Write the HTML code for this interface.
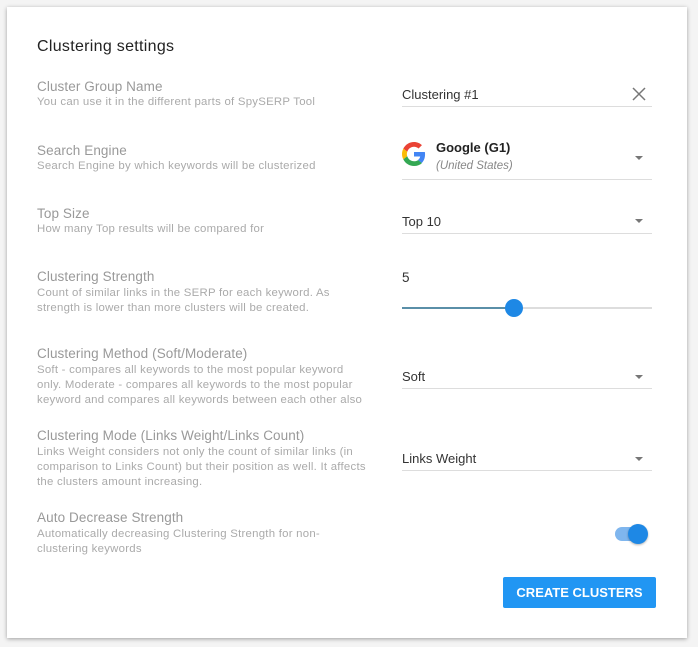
<!DOCTYPE html>
<html><head><style>
body{margin:0;width:698px;height:647px;background:#f4f4f4;font-family:"Liberation Sans",sans-serif;position:relative;overflow:hidden}
.card{position:absolute;left:7px;top:7px;width:680px;height:631px;background:#fff;box-shadow:0 1px 4px rgba(0,0,0,.35)}
.a{position:absolute;white-space:nowrap}
.t{left:37px;font-size:16px;color:#222;top:38px;letter-spacing:0.3px}
.l{left:37px;font-size:13.5px;color:#999;line-height:16px;letter-spacing:0.1px}
.d{left:37px;font-size:11.4px;color:#aaa;line-height:15px;letter-spacing:0.25px}
.v{left:402px;font-size:13px;color:#333}
.u{position:absolute;left:402px;width:250px;height:1px;background:#ddd}
.ar{position:absolute;left:635px;width:0;height:0;border-left:4px solid transparent;border-right:4px solid transparent;border-top:4px solid #777}
</style></head><body>
<div class="card"></div>
<div class="a t">Clustering settings</div>

<div class="a l" style="top:79px">Cluster Group Name</div>
<div class="a d" style="top:95px">You can use it in the different parts of SpySERP Tool</div>
<div class="a l" style="top:143px">Search Engine</div>
<div class="a d" style="top:159px">Search Engine by which keywords will be clusterized</div>
<div class="a l" style="top:206px">Top Size</div>
<div class="a d" style="top:222px">How many Top results will be compared for</div>
<div class="a l" style="top:269px">Clustering Strength</div>
<div class="a d" style="top:286px">Count of similar links in the SERP for each keyword. As<br>strength is lower than more clusters will be created.</div>
<div class="a l" style="top:346px">Clustering Method (Soft/Moderate)</div>
<div class="a d" style="top:363px">Soft - compares all keywords to the most popular keyword<br>only. Moderate - compares all keywords to the most popular<br>keyword and compares all keywords between each other also</div>
<div class="a l" style="top:428px">Clustering Mode (Links Weight/Links Count)</div>
<div class="a d" style="top:445px">Links Weight considers not only the count of similar links (in<br>comparison to Links Count) but their position as well. It affects<br>the clusters amount increasing.</div>
<div class="a l" style="top:510px">Auto Decrease Strength</div>
<div class="a d" style="top:527px">Automatically decreasing Clustering Strength for non-<br>clustering keywords</div>

<div class="a v" style="top:87px">Clustering #1</div>
<svg class="a" style="left:632px;top:87px" width="14" height="14"><path d="M1 1L13 13M13 1L1 13" stroke="#777" stroke-width="1.5"/></svg>
<div class="u" style="top:106px"></div>

<svg class="a" style="left:402px;top:142px" width="24" height="24" viewBox="0 0 48 48"><path fill="#EA4335" d="M24 9.5c3.5 0 6.6 1.2 9.1 3.6l6.8-6.8C35.8 2.4 30.2 0 24 0 14.6 0 6.6 5.4 2.6 13.3l7.9 6.2C12.4 13.7 17.7 9.5 24 9.5z"/><path fill="#4285F4" d="M46.1 24.5c0-1.6-.1-3.1-.4-4.5H24v9h12.4c-.5 2.900-2.2 5.4-4.7 7.1l7.7 6c4.5-4.2 6.7-10.3 6.7-17.6z"/><path fill="#FBBC05" d="M10.5 28.6c-.5-1.5-.8-3-.8-4.6s.3-3.1.8-4.6l-7.9-6.2C.9 16.5 0 20.1 0 24s.9 7.5 2.6 10.8l7.900-6.2z"/><path fill="#34A853" d="M24 48c6.5 0 11.9-2.1 15.9-5.8l-7.7-6c-2.2 1.5-5 2.3-8.2 2.3-6.3 0-11.6-4.2-13.5-10l-7.9 6.2C6.6 42.6 14.6 48 24 48z"/></svg>
<div class="a" style="left:436px;top:140px;font-size:13px;font-weight:bold;color:#222">Google (G1)</div>
<div class="a" style="left:436px;top:160px;font-size:11.5px;font-style:italic;color:#888">(United States)</div>
<div class="ar" style="top:156px"></div>
<div class="u" style="top:179px"></div>

<div class="a v" style="top:214px">Top 10</div>
<div class="ar" style="top:219px"></div>
<div class="u" style="top:233px"></div>

<div class="a v" style="top:270px;font-size:13.5px">5</div>
<div class="a" style="left:402px;top:307px;width:112px;height:2px;background:#5a8fa8"></div>
<div class="a" style="left:514px;top:307px;width:138px;height:2px;background:#ddd"></div>
<div class="a" style="left:505px;top:299px;width:18px;height:18px;border-radius:50%;background:#1e88e5"></div>

<div class="a v" style="top:369px">Soft</div>
<div class="ar" style="top:375px"></div>
<div class="u" style="top:388px"></div>

<div class="a v" style="top:451px">Links Weight</div>
<div class="ar" style="top:457px"></div>
<div class="u" style="top:470px"></div>

<div class="a" style="left:615px;top:527px;width:32px;height:14px;border-radius:7px;background:#7fb6ee"></div>
<div class="a" style="left:628px;top:524px;width:20px;height:20px;border-radius:50%;background:#1e88e5;box-shadow:0 1px 2px rgba(0,0,0,.3)"></div>

<div class="a" style="left:503px;top:577px;width:153px;height:31px;background:#2196f3;border-radius:2px;color:#fff;font-weight:bold;font-size:13px;line-height:31px;text-align:center">CREATE CLUSTERS</div>
</body></html>
